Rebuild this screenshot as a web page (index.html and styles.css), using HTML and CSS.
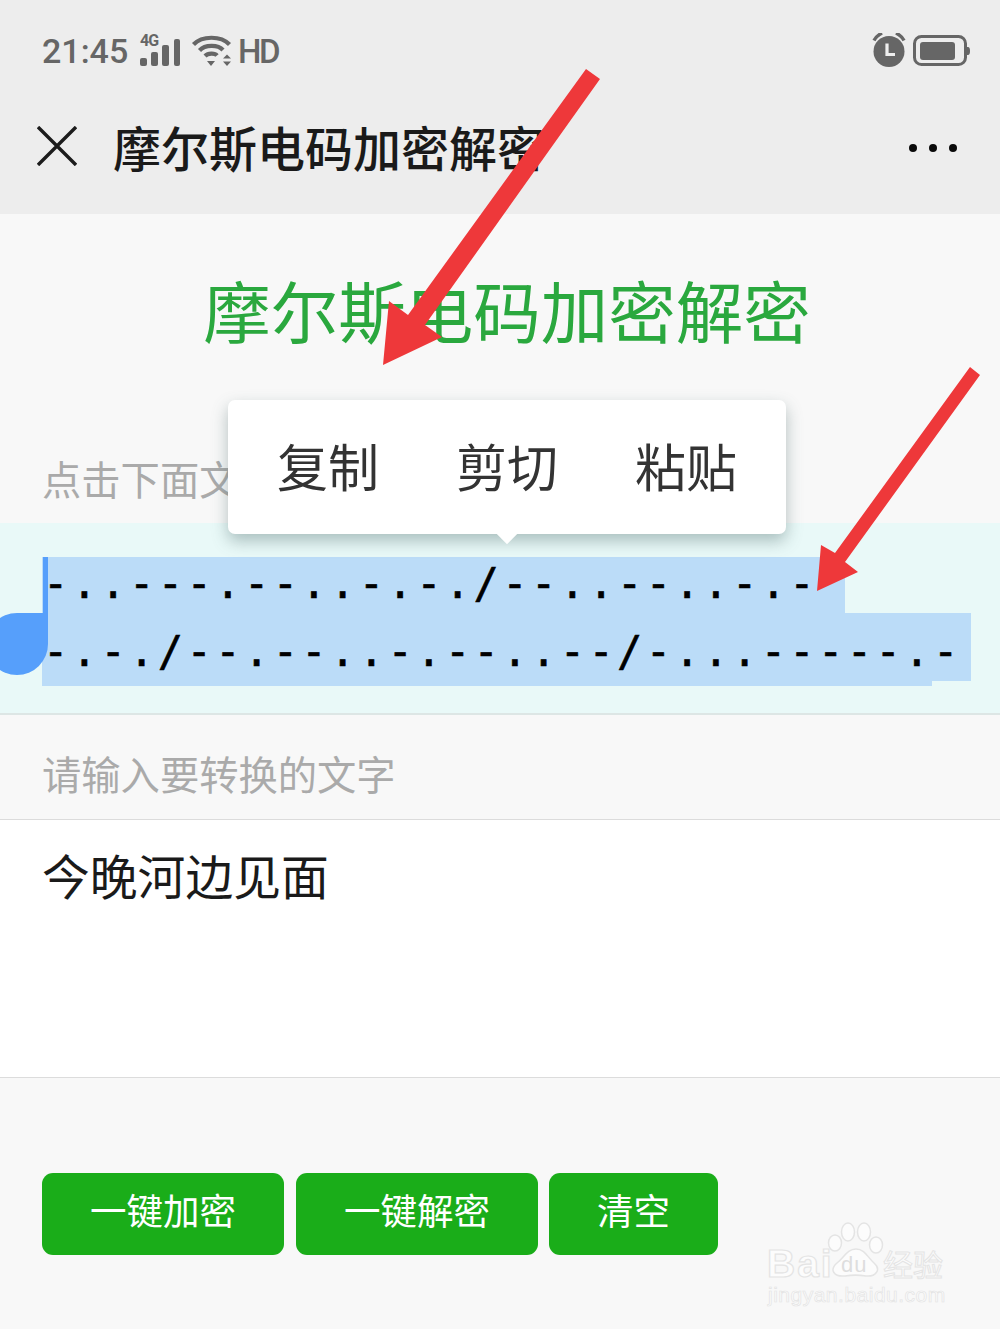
FILE: index.html
```html
<!DOCTYPE html>
<html lang="zh">
<head>
<meta charset="utf-8">
<title>摩尔斯电码加密解密</title>
<link rel="stylesheet" href="styles.css">
</head>
<body>
<div class="page">
  <header class="top">
    <div class="status">
      <div class="status-left">
        <span class="time">21:45</span>
        <span class="signal">
          <span class="net">4G</span>
          <svg class="bars" width="40" height="30" viewBox="0 0 40 30"><rect x="0" y="19" width="7" height="8" rx="2"/><rect x="11" y="13" width="7" height="14" rx="2"/><rect x="22" y="6" width="7" height="21" rx="2"/><rect x="34" y="0" width="6" height="27" rx="2"/></svg>
        </span>
        <svg class="wifi" width="42" height="32" viewBox="0 0 42 32"><g fill="none" stroke="#666" stroke-width="4.200"><path d="M2.500 9.500C11 0.500 30 0.500 38.500 9.500"/><path d="M8.500 15.500C14 9.500 27 9.500 32 15"/><path d="M14 21C17 18 24 18 26 20.500"/></g><path d="M16 26H24L20 31ZM32 23.500L36 19.500L40 23.500ZM32 26.500H40L36 31Z" fill="#666"/></svg>
        <span class="hd">HD</span>
      </div>
      <div class="status-right">
        <svg class="alarm" width="36" height="36" viewBox="0 1.500 36 36"><circle cx="18" cy="20" r="15.500" fill="#666"/><path d="M3 9C5 5 8 3 11 1.500M33 9C31 5 28 3 25 1.500" fill="none" stroke="#666" stroke-width="3.400"/><path d="M16 12V23H24" fill="none" stroke="#eee" stroke-width="3.200"/></svg>
        <svg width="57" height="32" viewBox="0 0 57 32"><rect x="1.500" y="1.500" width="51" height="28" rx="7" fill="none" stroke="#666" stroke-width="3"/><rect x="7" y="7" width="35" height="18" rx="3" fill="#666"/><path d="M54 12H55A2 4 0 0 1 55 20H54Z" fill="#666"/></svg>
      </div>
    </div>
    <nav class="nav">
      <svg class="close" width="40" height="40" viewBox="0 0 40 40"><path d="M1 1L39 39M39 1L1 39" stroke="#1c1c1c" stroke-width="3.400" fill="none"/></svg>
      <h1 class="nav-title">摩尔斯电码加密解密</h1>
      <div class="dots"><i></i><i></i><i></i></div>
    </nav>
  </header>

  <main class="content">
    <h2 class="title">摩尔斯电码加密解密</h2>
    <p class="label label-top">点击下面文字复制</p>
    <section class="result">
      <div class="selection">
        <div class="sel-line sel-one">-..---.--..-.-./--..--..-.-</div>
        <div class="sel-line sel-two">-.-./--.--..-.--..--/-...-----.-</div>
        <div class="sel-tail"></div>
      </div>
      <span class="caret"></span>
      <span class="handle"></span>
    </section>
    <p class="label label-input">请输入要转换的文字</p>
    <section class="input">今晚河边见面</section>
    <div class="actions">
      <button class="btn btn-wide">一键加密</button>
      <button class="btn btn-wide">一键解密</button>
      <button class="btn btn-small">清空</button>
    </div>
  </main>

  <div class="popup">
    <span>复制</span><span>剪切</span><span>粘贴</span>
  </div>

  <svg class="arrows" width="1000" height="1329" viewBox="0 0 1000 1329">
    <path d="M586 69L600 79L425 325L442 337L383 365L389 301L408 315Z" fill="#ee383a"/>
    <path d="M970 367L980 375L845 562L858 572L817 591L821 545L835 553Z" fill="#ee383a"/>
  </svg>

  <div class="mark">
    <div class="mark-top">
      <span class="mark-word">Bai</span>
      <svg class="paw" width="64" height="60" viewBox="0 0 64 60"><g fill="#fcfcfc" stroke="#e4e4e4" stroke-width="1.500"><ellipse cx="13" cy="22" rx="6.500" ry="8"/><ellipse cx="26" cy="11" rx="6.500" ry="9"/><ellipse cx="42" cy="11" rx="6.500" ry="9"/><ellipse cx="54" cy="24" rx="6.500" ry="8"/><path d="M34 28C43 28 46 37 52 42C60 49 53 56 44 55C38 54 29 54 23 55C12 56 7 49 15 42C22 37 25 28 34 28Z"/></g></svg>
      <span class="mark-du">du</span>
      <span class="mark-cn">经验</span>
    </div>
    <div class="mark-url">jingyan.baidu.com</div>
  </div>
</div>
</body>
</html>
```
FILE: styles.css
```css
* { box-sizing: border-box; }
html, body { margin: 0; padding: 0; }
body { width: 1000px; height: 1329px; overflow: hidden; background: #f8f8f8; font-family: "Noto Sans CJK SC", "Noto Sans", sans-serif; }
.page { position: relative; width: 1000px; height: 1329px; overflow: hidden; }

.top { height: 214px; background: #ededed; }
.status { height: 97px; padding: 5px 30px 0 42px; display: flex; justify-content: space-between; align-items: center; }
.status-left { display: flex; align-items: center; }
.status-right { display: flex; align-items: center; gap: 6px; }
.time { font: 500 34px/1 Roboto, sans-serif; color: #666; width: 98px; }
.signal { position: relative; width: 40px; height: 30px; display: block; margin-right: 11px; }
.bars { display: block; fill: #666; position: absolute; left: 0; top: 3px; }
.net { position: absolute; left: 0; top: -3px; font: 700 16px/1 Roboto, sans-serif; letter-spacing: -1px; color: #666; }
.wifi { display: block; margin-right: 5px; }
.hd { font: 500 33px/1 Roboto, sans-serif; letter-spacing: -2.500px; color: #666; }

.nav { height: 117px; padding: 0 37px 20px; display: flex; align-items: center; }
.close { flex: none; }
.nav-title { margin: 0 0 0 36px; flex: 1; font-size: 48px; line-height: 66px; font-weight: 500; color: #1a1a1a; white-space: nowrap; }
.dots { display: flex; gap: 12px; margin: 4px 6px 0 0; }
.dots i { width: 8px; height: 8px; border-radius: 50%; background: #0a0a0a; }

.content { display: block; }
.title { margin: 0; padding: 49px 0 0 14px; height: 146px; text-align: center; font-size: 67.500px; line-height: 92px; font-weight: 400; color: #2aa83e; }
.label { margin: 0; padding-left: 42px; font-size: 39.300px; line-height: 50px; color: #aaa; }
.label-top { height: 163px; padding-top: 93px; }
.result { position: relative; height: 192px; padding: 34px 0 0 42px; background: #e9f9f8; border-bottom: 2px solid #dde6e5; }
.sel-line { font: 400 42px/1 "DejaVu Sans Mono", monospace; letter-spacing: 3.420px; color: #000; -webkit-text-stroke: .6px #000; background: #bbdcf8; white-space: nowrap; padding-left: 1px; overflow: hidden; }
.sel-one { width: 803px; height: 56px; padding-top: 6px; }
.sel-two { width: 929px; height: 68px; padding-top: 18px; }
.sel-tail { width: 890px; height: 5px; background: #bbdcf8; }
.caret { position: absolute; left: 43px; top: 34px; width: 5px; height: 56px; background: #569ffb; }
.handle { position: absolute; left: -14px; top: 90px; width: 62px; height: 62px; background: #569ffb; border-radius: 50% 0 50% 50%; }
.label-input { height: 105px; padding-top: 33px; border-bottom: 1px solid #dcdcdc; }
.input { height: 258px; background: #fff; border-bottom: 1px solid #dcdcdc; padding: 21px 0 0 42px; font-size: 47.800px; line-height: 68px; color: #1a1a1a; }
.actions { display: flex; padding: 95px 0 0 42px; gap: 12px; }
.btn { height: 82px; border: 0; border-radius: 11px; background: #1aad19; color: #fff; font: 400 36.500px/1 "Noto Sans CJK SC", sans-serif; padding: 0 0 8px; }
.btn-wide { width: 242px; }
.btn-small { width: 169px; margin-left: -1px; }

.popup { position: absolute; left: 228px; top: 400px; width: 558px; height: 134px; padding: 0 49px 4px; background: #fff; border-radius: 7px; box-shadow: 0 7px 16px rgba(80, 110, 110, .42); display: flex; align-items: center; justify-content: space-between; font-size: 51px; color: #333; }
.popup::after { content: ""; position: absolute; left: 269px; bottom: -10px; width: 20px; height: 20px; background: #fff; transform: rotate(45deg) scale(.72); }

.arrows { position: absolute; left: 0; top: 0; pointer-events: none; }

.mark { position: absolute; left: 766px; top: 1221px; width: 190px; color: transparent; }
.mark-top { position: relative; height: 60px; }
.mark-word { position: absolute; left: 1px; top: 23px; font: 700 39px/1 "Liberation Sans", sans-serif; letter-spacing: 2px; -webkit-text-stroke: 1.200px #e4e4e4; color: #fcfcfc; }
.paw { position: absolute; left: 56px; top: 0; }
.mark-du { position: absolute; left: 75px; top: 33px; font: 400 22px/1 "Liberation Sans", sans-serif; letter-spacing: 1px; color: #dedede; }
.mark-cn { position: absolute; left: 117px; top: 24px; font-size: 30px; line-height: 36px; -webkit-text-stroke: 1px #e4e4e4; color: #fcfcfc; }
.mark-url { position: absolute; left: 2px; top: 63px; font: 400 21px/1 "Liberation Sans", sans-serif; letter-spacing: .500px; -webkit-text-stroke: .700px #e4e4e4; color: #fcfcfc; white-space: nowrap; }
```
